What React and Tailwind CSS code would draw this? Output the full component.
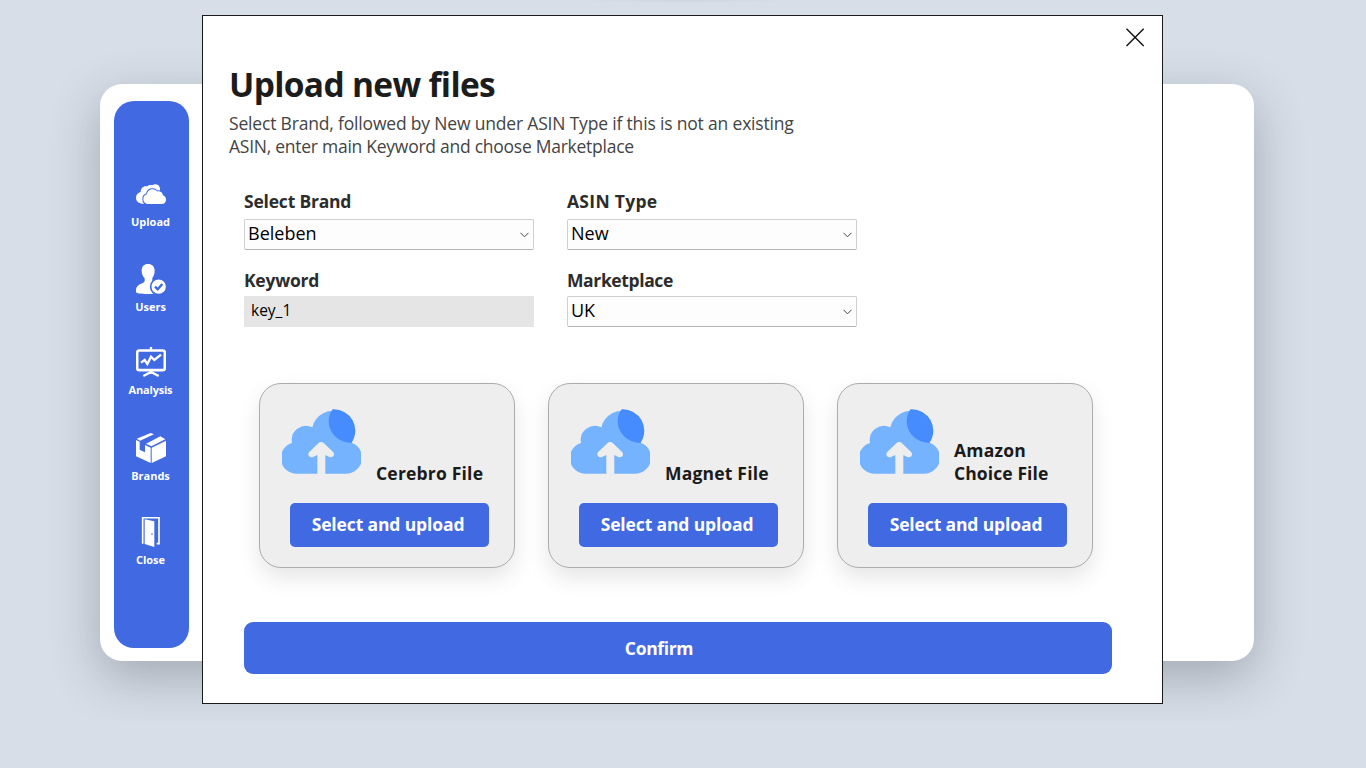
function CloudsIcon() {
  return (
    <svg className="size-[30px]" viewBox="0 0 90 90" fill="#fff">
      <path d="M22 74C9 74 0 67 0 56C0 47 6 41 14 39C14 27 22 20 34 22C39 15 47 19 50 18C58 12 71 17 72 28V42L40 74Z" />
      <path
        d="M37 75C27 75 22 68 22 60C22 52 27 47 33 46C34 36 42 31 50 31C56 31 60 34 63 37C72 35 80 40 81 49C87 51 90 56 90 62C90 70 84 75 78 75Z"
        stroke="#4169e1"
        strokeWidth="6"
        paintOrder="stroke"
      />
    </svg>
  );
}

function UserCheckIcon() {
  return (
    <svg className="size-[30px]" viewBox="0 0 90 90" fill="#fff">
      <path d="M36 0C48 0 56 7 56 20C56 32 52 37 49 42V51C50 57 64 58 68 72V86C60 89 48 90 36 90C14 90 0 88 0 84V78C0 60 23 60 26 52V43C21 37 17 31 17 20C17 7 24 0 36 0Z" />
      <circle cx="68" cy="68" r="24" stroke="#4169e1" strokeWidth="5" />
      <path d="M57 68L65 76L79 60" fill="none" stroke="#4169e1" strokeWidth="7" />
    </svg>
  );
}

function BoardIcon() {
  return (
    <svg className="size-[30px]" viewBox="0 0 90 90" fill="none" stroke="#fff">
      <rect x="3.5" y="10.5" width="83" height="59" rx="6" strokeWidth="8" />
      <path d="M45 0V10M45 70V80" strokeWidth="7" />
      <path d="M22 87L45 75L68 87" strokeWidth="7" />
      <path d="M15 47L26 39L34 51L45 29L55 39L75 23" strokeWidth="7" />
    </svg>
  );
}

function BoxIcon() {
  return (
    <svg className="size-[30px]" viewBox="0 0 90 90" fill="#fff">
      <path d="M2 17L44 0L54 4L12 23Z" />
      <path d="M30 32L73 10L88 19L46 40Z" />
      <path d="M0 21L11 26V50L27 58V36L44 44V90L0 70Z" />
      <path d="M47 44L90 23V70L47 90Z" />
    </svg>
  );
}

function DoorIcon() {
  return (
    <svg className="size-[30px]" viewBox="0 0 90 90">
      <path d="M20 80V2H69V80H62" fill="none" stroke="#fff" strokeWidth="5" />
      <path d="M26 7L55 13V90L26 81Z" fill="#fff" />
      <circle cx="48" cy="51" r="2.5" fill="#4169e1" />
    </svg>
  );
}

function UploadCloud() {
  return (
    <svg className="h-[65px] w-[79px] shrink-0" viewBox="36 41 237 195">
      <path
        fill="#76b3fe"
        d="M82 235A47 47 0 0 1 66 143A43 43 0 0 1 127 96A64 64 0 1 1 245 142A48 48 0 0 1 226 235Z"
      />
      <path fill="#478cff" d="M188 42A64 64 0 0 1 244 143C205 142 176 112 176 78C176 64 181 51 188 42Z" />
      <path
        fill="#eee"
        d="M153 140Q158 140 162 144L190 171Q194 177 190 182Q186 187 178 185L166 179V237H142V179L129 185Q121 187 117 182Q113 177 117 171L145 144Q149 140 153 140Z"
      />
    </svg>
  );
}

function NavItem({ icon, label, className }) {
  return (
    <button className={`flex w-full flex-col items-center ${className}`}>
      {icon}
      <span className="mt-[5px] h-[15px] text-[11px] leading-[15px] font-bold text-white">{label}</span>
    </button>
  );
}

function Select({ value }) {
  return (
    <div className="flex h-[31px] items-center justify-between rounded-[2px] border border-[#cfcfcf] border-b-[#b4b4b4] bg-[#fdfdfd] pr-1 pl-[3px]">
      <span className="pb-[3px] text-[18px] leading-6 text-black">{value}</span>
      <svg className="h-[6px] w-[9px]" viewBox="0 0 9 6" fill="none" stroke="#444">
        <path d="M.5 .8L4.5 4.8L8.5 .8" />
      </svg>
    </div>
  );
}

function Field({ label, tracking, children }) {
  return (
    <div className="flex w-[290px] flex-col">
      <span className={`h-6 text-[17.5px] leading-6 font-bold whitespace-nowrap text-[#2c2c2c] ${tracking}`}>{label}</span>
      {children}
    </div>
  );
}

function FileCard({ children }) {
  return (
    <div className="flex h-[185px] w-[256px] flex-col rounded-[22px] border border-[#acacac] bg-[#eee] shadow-[0_10px_22px_rgba(0,0,0,0.1)]">
      <div className="flex h-[101px] items-end pl-[22px]">
        <div className="flex h-full items-start pt-[25px]">
          <UploadCloud />
        </div>
        <div className="pl-[15px] text-[17.5px] leading-[23px] font-bold tracking-[0.2px] whitespace-nowrap text-[#1a1a1a]">
          {children}
        </div>
      </div>
      <button className="mt-[18px] ml-[30px] h-11 w-[199px] rounded-[5px] bg-[#4169e1] pr-[3px] pb-[2px] text-[17.5px] font-bold tracking-[-0.13px] text-white">
        Select and upload
      </button>
    </div>
  );
}

function Sidebar() {
  return (
    <nav className="flex h-[547px] w-[75px] flex-col rounded-[20px] bg-[#4169e1] pt-[78px]">
      <NavItem className="pr-[2px]" icon={<CloudsIcon />} label="Upload" />
      <NavItem className="mt-[35px] pr-[2px]" icon={<UserCheckIcon />} label="Users" />
      <NavItem className="mt-[33px] pr-[2px] tracking-[-0.2px]" icon={<BoardIcon />} label="Analysis" />
      <NavItem className="mt-[36px] pr-[2px]" icon={<BoxIcon />} label="Brands" />
      <NavItem className="mt-[34px] pr-[2px]" icon={<DoorIcon />} label="Close" />
    </nav>
  );
}

function UploadDialog() {
  return (
    <section className="absolute top-[15px] left-[202px] flex h-[689px] w-[961px] flex-col border border-[#1a1a1a] bg-white">
      <header className="flex h-[48px] justify-end pt-3 pr-[17px]">
        <button className="size-5" aria-label="Close">
          <svg className="size-5" viewBox="0 0 20 20" stroke="#111" strokeWidth="1.4">
            <path d="M1.5 .8L18.7 18M18.7 .8L1.5 18" />
          </svg>
        </button>
      </header>
      <div className="flex flex-col pl-[26px]">
        <h1 className="h-10 text-[33.5px] leading-10 font-bold tracking-[-0.66px] text-[#1c1c1c]">Upload new files</h1>
        <p className="mt-[8px] text-[17.5px] leading-[23px] tracking-[-0.18px] whitespace-nowrap text-[#444]">
          Select Brand, followed by New under ASIN Type if this is not an existing
          <br />
          <span className="tracking-[-0.26px]">ASIN, enter main Keyword and choose Marketplace</span>
        </p>
      </div>
      <div className="mt-[31px] grid grid-cols-[290px_290px] gap-x-[33px] pl-[41px]">
        <Field label="Select Brand" tracking="tracking-[-0.2px]">
          <div className="mt-[6px]"><Select value="Beleben" /></div>
        </Field>
        <Field label="ASIN Type" tracking="tracking-[0.3px]">
          <div className="mt-[6px]"><Select value="New" /></div>
        </Field>
      </div>
      <div className="mt-[18px] grid grid-cols-[290px_290px] gap-x-[33px] pl-[41px]">
        <Field label="Keyword" tracking="tracking-[-0.25px]">
          <div className="mt-[4px] flex h-[31px] items-center bg-[#e5e5e5] pb-[2px] pl-[7px] text-[15.5px] text-black">key_1</div>
        </Field>
        <Field label="Marketplace" tracking="tracking-[-0.38px]">
          <div className="mt-[4px]"><Select value="UK" /></div>
        </Field>
      </div>
      <div className="mt-[56px] flex gap-[33px] pl-[56px]">
        <FileCard>Cerebro File</FileCard>
        <FileCard>Magnet File</FileCard>
        <FileCard>Amazon<br /><span className="tracking-[0.1px]">Choice File</span></FileCard>
      </div>
      <button className="mt-[54px] ml-[41px] h-[52px] w-[868px] rounded-[9px] bg-[#4169e1] pr-[38px] text-[17.5px] font-bold tracking-[-0.35px] text-white">
        Confirm
      </button>
    </section>
  );
}

export default function App() {
  return (
    <div className="relative h-[768px] w-full overflow-hidden bg-[#d7dee8] font-['Open_Sans','Noto_Sans',sans-serif]">
      <div className="flex h-[721px] flex-col items-center overflow-hidden pr-[12px]">
        <div className="-mt-[3px] ml-[11px] h-[6px] w-[230px] shrink-0 bg-radial from-[#cdd4de] to-[#d7dee8] to-70%" />
        <main className="mt-[81px] h-[577px] w-[1154px] shrink-0 rounded-[22px] bg-white pt-[17px] pl-[14px] shadow-[0_16px_50px_rgba(40,45,55,0.3)]">
          <Sidebar />
        </main>
      </div>
      <UploadDialog />
    </div>
  );
}
